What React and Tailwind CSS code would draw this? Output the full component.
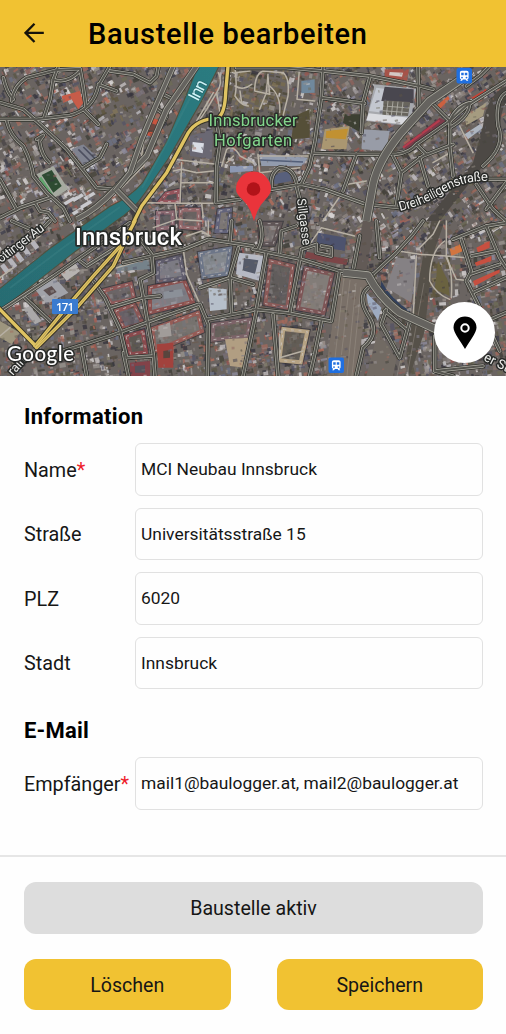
import React from "react";

function createRandom(seed) {
  let a = seed;
  return () => {
    a = (a + 0x6d2b79f5) | 0;
    let t = Math.imul(a ^ (a >>> 15), 1 | a);
    t = (t + Math.imul(t ^ (t >>> 7), 61 | t)) ^ t;
    return ((t ^ (t >>> 14)) >>> 0) / 4294967296;
  };
}

const TONES = [
  "#6e6664", "#827a78", "#4b4648", "#938b86", "#37363d", "#a09a9a", "#6b5c53", "#6d6a56",
  "#7f6d64", "#555465", "#8d8b9c", "#c4bfc0", "#a0695c", "#5a5646", "#766e77", "#d8d5d4",
  "#5b5147", "#403f38", "#8d625c", "#6c7084", "#47443c", "#857f6f", "#99938f", "#3f3e4c",
];

const WOOD_TONES = ["#5f563f", "#6b6148", "#4e4938", "#786c50", "#57513f", "#837659", "#464334"];

function isWood(x, y) {
  return (
    Math.hypot((x - 114) / 1.1, y - 45) < 16 ||
    (x > 232 && x < 290 && y < 48) ||
    (x > 428 && x < 450 && y > 190 && y < 230)
  );
}

function buildHouses() {
  const rand = createRandom(71);
  const out = [];
  for (let i = 0; i < 8200; i++) {
    const x = rand() * 520 - 6;
    const y = rand() * 320 - 6;
    const angle = x < 200 && y < 200 ? -32 : x > 330 && y < 170 ? -38 : y > 150 ? -15 : 8;
    const w = 1.5 + rand() * 5.5;
    const h = 1.5 + rand() * 3.2;
    const list = isWood(x, y) && rand() < 0.85 ? WOOD_TONES : TONES;
    const tone = list[Math.floor(rand() * list.length)];
    const turn = angle + (rand() > 0.5 ? 90 : 0) + rand() * 12;
    out.push(
      <rect key={i} x={x} y={y} width={w} height={h} fill={tone} transform={`rotate(${turn} ${x} ${y})`} opacity={0.8} />
    );
  }
  const roofs = ["#b35f52", "#a96958", "#97524d", "#9d554c", "#bf6e59", "#dcdbde", "#c9c8cf"];
  for (let i = 0; i < 420; i++) {
    const x = rand() * 506;
    const y = rand() * 309;
    const w = 2.5 + rand() * 5;
    const h = 1.4 + rand() * 1.8;
    const turn = (y > 150 ? -15 : -34) + (rand() > 0.5 ? 90 : 0);
    if (isWood(x, y)) continue;
    out.push(
      <rect key={`r${i}`} x={x} y={y} width={w} height={h} fill={roofs[i % roofs.length]} transform={`rotate(${turn} ${x} ${y})`} opacity={0.7} />
    );
  }
  return out;
}

function buildDetail() {
  const rand = createRandom(19);
  const out = [];
  for (let i = 0; i < 2200; i++) {
    const x = rand() * 506;
    const y = rand() * 309;
    out.push(
      <rect key={i} x={x} y={y} width={1 + rand() * 3.5} height={1 + rand() * 2} fill={TONES[Math.floor(rand() * TONES.length)]} transform={`rotate(${-20 + rand() * 20} ${x} ${y})`} opacity={0.5} />
    );
  }
  return out;
}

const HOUSES = buildHouses();
const DETAIL = buildDetail();

// City blocks with roofs round a courtyard: outline, roof tone, yard tone.
const BLOCKS = [
  ["M812 582 L878 598 L862 722 L796 710Z", "#8a5a58", "#5e5a5a"],
  ["M918 604 L996 622 L970 738 L894 724Z", "#7d5557", "#8b8480"],
  ["M348 732 L402 714 L428 770 L372 784Z", "#8c5654", "#66606a"],
  ["M308 672 L392 650 L402 696 L334 710Z", "#8e5958", "#6c6669"],
  ["M450 662 L552 640 L578 704 L450 736Z", "#8b5150", "#868690"],
  ["M378 808 L428 794 L438 856 L392 862Z", "#8a4a4d", "#58544f"],
  ["M458 786 L594 738 L606 792 L464 852Z", "#965c57", "#7b7774"],
  ["M850 786 L922 794 L902 886 L838 880Z", "#b6a384", "#5f5a52"],
  ["M640 774 L750 758 L742 806 L638 818Z", "#7b6468", "#66605a"],
  ["M474 438 L518 436 L518 480 L474 486Z", "#8a6870", "#5a565c"],
  ["M542 428 L596 428 L596 484 L542 480Z", "#93676a", "#6a6262"],
  ["M474 586 L540 570 L552 632 L474 642Z", "#5e5b6c", "#83838f"],
  ["M500 380 L536 372 L536 404 L480 404Z", "#95545c", "#4f4a50"],
  ["M658 432 L690 428 L686 492 L650 492Z", "#62637a", "#827d7a"],
  ["M600 560 L690 545 L680 620 L610 630Z", "#6d7688", "#8e959e"],
  ["M780 470 L840 470 L820 530 L785 530Z", "#5f5557", "#7d7676"],
];

// Each map quadrant holds its roads in a 3:1 drawing scale.
const NW = "translate(0 -1) scale(0.33333)";
const NE = "translate(253 -1) scale(0.33333)";
const SW = "translate(0 154) scale(0.33333)";
const SE = "translate(253 154) scale(0.33333)";

const ROADS = [
  [NW, "M0 160 L110 160 L210 148 Q280 130 295 60 L330 0"],
  [NW, "M-5 108 L70 130 L120 175 L200 250 L255 320 L290 365 L345 370"],
  [NW, "M35 105 Q40 60 80 35 L170 12 L240 8 Q250 60 258 120"],
  [NW, "M175 0 L160 40 L150 100 L132 155"],
  [NW, "M160 40 Q200 55 240 15"],
  [NW, "M10 35 Q20 80 40 100"],
  [NW, "M20 165 Q30 210 70 240 Q95 290 100 330 L140 380 L190 425 L210 465"],
  [NW, "M110 220 L130 208 L118 225 Q125 270 148 290"],
  [NW, "M320 235 L300 275 L250 305"],
  [NW, "M250 130 L295 175"],
  [NW, "M295 55 L350 75"],
  [NW, "M330 15 L400 25 L450 50 L470 30 L475 0"],
  [NW, "M0 455 L60 425 L150 395"],
  [NW, "M0 340 L50 430"],
  [NW, "M105 410 L120 435 L145 440 L165 465"],
  [NW, "M480 80 L520 100 M465 125 L500 150 L480 185"],
  [NW, "M650 170 L660 230 L650 300 L648 410 L720 400"],
  [NE, "M-50 5 L100 5 L210 15 L350 30 L500 60 L540 70"],
  [NE, "M210 0 L205 95 L185 230 L170 300 L145 355"],
  [NE, "M350 35 L330 110 L325 200"],
  [NE, "M205 95 L335 112"],
  [NE, "M495 0 L498 130"],
  [NE, "M180 262 L300 265 L430 265 Q470 260 490 235 L590 165 L640 120 L759 45"],
  [NE, "M310 265 L270 375"],
  [NE, "M55 370 L145 355 L215 370 L340 415 L440 425"],
  [NE, "M55 370 Q50 320 80 305 Q120 305 130 350"],
  [NE, "M530 105 L590 165 L590 240 L600 330"],
  [NE, "M590 165 Q610 120 650 110 Q650 150 590 185"],
  [NE, "M420 270 L445 320 L510 270 L600 235"],
  [NE, "M445 320 L430 420"],
  [NE, "M500 275 L525 360 M490 235 L520 265"],
  [NE, "M640 60 L680 30 L710 0"],
  [NE, "M759 80 Q725 100 735 180 Q760 240 690 300"],
  [NE, "M670 355 L720 430 L759 465 M759 350 L700 430 M759 340 L690 340"],
  [NE, "M130 360 L145 420"],
  [SW, "M0 270 L160 165 L290 75 L390 5"],
  [SW, "M75 230 L160 310"],
  [SW, "M280 180 L315 230 L360 325 L380 410"],
  [SW, "M190 390 L330 345 L480 290 L595 250"],
  [SW, "M330 260 L430 230 L480 225"],
  [SW, "M370 125 L455 105 L550 85 L625 55 L759 75"],
  [SW, "M410 40 L455 100 L460 155 L420 175 L430 230 L460 400 L465 465"],
  [SW, "M600 250 L625 310 L622 465"],
  [SW, "M715 80 L690 165 L695 280"],
  [SW, "M600 200 L690 170 L759 190"],
  [SW, "M620 295 L759 268"],
  [SW, "M380 410 L460 405 M370 395 L385 465 M245 380 L260 465"],
  [SW, "M240 120 L260 135 L355 75"],
  [SW, "M35 0 L115 35 L150 0 M695 0 L690 60"],
  [SE, "M0 85 L145 115 L260 150 L360 160"],
  [SE, "M40 95 L10 265 M145 90 L110 275 M260 150 L235 300 M20 0 Q35 50 15 85"],
  [SE, "M0 265 L100 275 L230 300"],
  [SE, "M60 280 L75 465 M205 300 L185 400 L170 465 M10 270 L-30 465"],
  [SE, "M145 85 L190 70 L190 95 L235 105 M205 75 L235 80 L235 105 M80 95 L85 30 L130 15"],
  [SE, "M360 160 L430 95 L480 40 L510 0"],
  [SE, "M380 110 L370 0 M320 45 L300 150"],
  [SE, "M625 55 L655 150 L640 180 L680 260 L740 390"],
  [SE, "M600 55 L700 15 L759 5"],
  [SE, "M700 15 L740 110 L759 140 M655 105 L730 90 M650 160 L740 130 M660 215 L759 170"],
  [SE, "M700 300 L759 275"],
  [SE, "M400 265 L385 310 L440 410 L470 300 M395 270 L460 325"],
  [SE, "M345 200 Q310 230 350 290 Q380 340 330 380 L310 465"],
  [SE, "M545 345 L545 450 L690 435 M545 450 L600 465"],
];

const PALE_PATHS = [
  [NW, "M435 195 L425 270 M460 225 L430 300 L365 365"],
  [NW, "M640 80 L590 165 M655 20 Q670 50 650 80 L620 130 L600 160 M650 80 L660 140"],
  [NW, "M705 5 Q712 60 705 90 M705 20 L750 15 M705 60 Q730 75 755 55 M705 90 Q725 120 745 120 M720 75 L725 110"],
  [NW, "M665 300 L680 250 Q700 235 720 270 L759 290 M680 290 L700 270"],
  [NW, "M520 280 L650 295 M545 290 L540 410 M440 410 L545 412 L645 412 M520 315 L545 310 L590 320 L640 315 M525 412 L530 460 M605 412 L610 455 M545 350 L640 350"],
  [SW, "M460 20 L530 -5 L605 0 M560 45 L605 30 L630 45 M550 85 L560 160 L600 250 M350 140 L450 110 M0 345 L30 320 M625 0 L625 50"],
  [NE, "M5 75 Q5 25 30 15 L90 20 Q110 35 105 90 L90 150 M45 25 L40 80 L20 130 M5 75 L50 85 L45 30"],
  [NE, "M50 60 Q85 90 80 140 M140 0 L132 100 L185 105 M15 265 L20 320 L140 305 M20 270 L165 270"],
  [NE, "M540 290 L600 255 M620 180 L660 260 M340 345 L285 355 L210 465"],
  [SE, "M435 90 L500 100 L580 105 L640 110 M580 0 L580 110 L610 175 L635 178"],
  [SE, "M580 105 Q600 150 595 230 M575 60 Q530 90 530 180 Q550 220 590 235"],
  [SE, "M500 80 L540 40 L560 0 M490 105 L480 300 M170 70 L205 20 L305 45"],
  [SE, "M80 340 L80 410 L150 390"],
  [SW, "M0 170 L40 140 M20 110 L70 80 M60 85 L120 45"],
];

function Strokes({ items, color, width }) {
  return (
    <g fill="none" stroke={color} strokeWidth={width} strokeLinejoin="round" strokeLinecap="round">
      {items.map(([t, d], i) => (
        <path key={i} transform={t} d={d} />
      ))}
    </g>
  );
}

function Road({ d, t, w = 22 }) {
  return (
    <g transform={t} fill="none" strokeLinejoin="round" strokeLinecap="butt">
      <path d={d} stroke="#3e3e39" strokeWidth={w + 5} />
      <path d={d} stroke="#a8a69d" strokeWidth={w} />
      <path d={d} stroke="#65645f" strokeWidth={w - 5} />
    </g>
  );
}

function TrainBadge({ x, y }) {
  return (
    <g transform={`translate(${x} ${y})`}>
      <rect width="15.5" height="15.5" rx="2" fill="#1f6fe0" />
      <path
        fill="#fff"
        fillRule="evenodd"
        d="M5.4 2.8h4.7c1.3 0 2 .7 2 2v4.7c0 1-.5 1.6-1.3 1.8l1 1.4H10l-.9-1.2H6.4l-.9 1.2H3.7l1-1.4c-.8-.2-1.3-.8-1.3-1.8V4.8c0-1.3.7-2 2-2ZM4.7 4.7v2.6h2.5V4.7Zm3.6 0v2.6h2.5V4.7ZM5.5 8.7a.9.9 0 1 0 0 1.8.9.9 0 0 0 0-1.8Zm4.5 0a.9.9 0 1 0 0 1.8.9.9 0 0 0 0-1.8Z"
      />
    </g>
  );
}

function SatelliteMap() {
  const riverway = "M199 -2 L184 35 L167 75 L143 116 Q130 131 110 140 L90 154 L50 182 L0 222 L0 243 L37 214 L75 184 L115 154 Q133 143 145 125 L168 91 L187 58 L201 34 L219 -2Z";
  const highway = "M684 0 L677 80 Q675 140 655 155 Q590 160 565 200 L500 320 L425 420 L400 470";
  return (
    <svg
      viewBox="0 0 506 309"
      className="block h-[309px] w-full"
      fontFamily="Roboto, sans-serif"
      paintOrder="stroke"
      strokeLinejoin="round"
    >
      <defs>
        <filter id="soft" x="0" y="0" width="100%" height="100%">
          <feGaussianBlur stdDeviation="0.45" />
        </filter>
        <linearGradient id="river" x1="0" y1="1" x2="1" y2="0">
          <stop offset="0" stopColor="#286c72" />
          <stop offset="1" stopColor="#2c7b80" />
        </linearGradient>
      </defs>
      <rect width="506" height="309" fill="#6a6461" />
      <g filter="url(#soft)">
        {HOUSES}
        <g transform="scale(0.33333)">
          {BLOCKS.map(([d, roof, yard]) => (
            <g key={d} strokeLinejoin="miter">
              <path d={d} fill={yard} stroke="#35333a" strokeWidth="18" opacity=".75" />
              <path d={d} fill="none" stroke={roof} strokeWidth="12" />
              <path d={d} fill="none" stroke="#cfc8c6" strokeWidth="3" strokeDasharray="9 14" opacity=".7" />
            </g>
          ))}
        </g>
        <g transform={NW}>
          <path d="M185 90 L240 75 L250 110 L235 130 L215 100 L190 110Z" fill="#c75c4a" />
          <path d="M455 155 L485 165 L465 215 L432 205Z" fill="#c9543f" />
          <path d="M455 172 L470 177 L460 200 L447 195Z" fill="#6d4741" />
          <path d="M110 325 L160 300 L205 370 L155 400Z" fill="#a6aaa0" />
          <path d="M125 327 L155 312 L185 360 L160 380Z" fill="#2d4c33" />
          <path d="M120 335 L155 388" stroke="#62a56e" strokeWidth="9" />
          <path d="M570 210 L640 190 L635 280 L570 270Z" fill="#6b6773" />
          <path d="M578 228 L612 232 L608 262 L576 256Z" fill="#d9dde5" />
          <path d="M215 250 L250 235 L300 280 L255 305Z" fill="#808390" />
          <path d="M235 250 L270 285 M250 243 L285 278" stroke="#4d5060" strokeWidth="5" />
          <path d="M690 300 L759 300 L759 315 L690 320Z" fill="#8d98b2" />
          {[[190, 410], [215, 400], [240, 420], [215, 440], [250, 395]].map(([x, y]) => (
            <path key={`${x}${y}`} d={`M${x} ${y} l30 -18 l7 8 l-30 18Z`} fill="#c9c9cd" />
          ))}
        </g>
        <g transform={NE}>
          <path d="M365 55 L490 68 L470 180 L340 165Z" fill="#a7a9ae" />
          <path d="M370 65 L405 70 L390 140 L348 135Z" fill="#c3c7cf" />
          <path d="M395 62 L482 70 L482 112 L385 105Z" fill="#4a4650" />
          <path d="M392 103 L472 108 L465 150 L388 146Z" fill="#68655d" />
          <path d="M405 105 L400 148 M420 106 L415 148 M435 107 L430 148 M450 108 L445 149 M390 120 L470 126 M388 134 L466 140" stroke="#b1b0a8" strokeWidth="2.5" />
          <path d="M347 142 L470 155 L465 176 L340 163Z" fill="#dadbdf" />
          <path d="M330 190 L410 195 L400 255 L325 250Z" fill="#989ca7" />
          <path d="M145 45 L185 40 L185 80 L145 82Z" fill="#70889c" />
          <path d="M125 150 L170 130 L170 215 L115 220Z" fill="#554f39" />
          <path d="M215 190 L290 180 L280 250 L205 250Z" fill="#aa9771" />
          <path d="M220 195 L285 188 L278 220 L218 215Z" fill="#c19130" />
          <path d="M275 145 L330 145 L325 200 L270 170Z" fill="#3c3f31" />
          <path d="M20 265 L165 275 L145 300 L25 300Z" fill="#929bad" />
          <path d="M22 282 L150 288" stroke="#535e78" strokeWidth="5" />
          <path d="M395 10 L468 10 L462 45 L395 35Z" fill="#a65349" />
          <path d="M410 18 L450 20 L447 32 L408 28Z" fill="#d4c9c5" />
          <path d="M450 240 L560 155 L578 165 L460 255Z" fill="#7b3a4a" />
          <path d="M450 245 L560 163" stroke="#b53b4d" strokeWidth="6" />
          <path d="M655 95 L700 68 L700 82 L665 102Z" fill="#c64538" />
          <path d="M550 120 L585 90 L590 98 L560 130Z" fill="#cc6040" />
          <path d="M635 150 L700 110 L690 150 L640 178Z" fill="#a59b80" />
          <path d="M635 205 L680 175 L690 185 L645 220Z" fill="#aeb5c0" />
          <path d="M690 180 Q700 90 759 60 L759 110 Q735 150 745 220 L690 300 L560 465 L520 465 L660 290Z" fill="#4e4a45" />
          <path d="M60 325 L110 315 L115 345 L65 355Z" fill="#59607b" />
        </g>
        <g transform={SW}>
          {[[0, 135], [22, 118], [43, 100], [64, 83], [88, 62]].map(([x, y]) => (
            <path key={x} d={`M${x} ${y} l12 -8 l18 24 l-12 9Z`} fill="#b5b4ba" />
          ))}
          <path d="M105 205 L165 170 L205 215 L140 250Z" fill="#a1a2a8" />
          <path d="M130 208 L155 195 L170 213 L148 225Z" fill="#5d5050" />
          <path d="M70 265 L90 255 L125 300 L105 310Z" fill="#aaa8a8" />
          <path d="M180 155 L225 125 L240 150 L200 180Z" fill="#b7b3b0" />
          <path d="M360 130 L445 115 L450 145 L350 150Z" fill="#75828a" />
          <path d="M490 212 L545 204 L550 226 L492 234Z" fill="#8b9098" />
          <path d="M625 200 L680 205 L680 265 L630 270Z" fill="#b6bfca" />
          <path d="M715 95 L795 105 L780 180 L708 160Z" fill="#b6b9c4" />
          <path d="M732 112 L775 118 L765 158 L728 148Z" fill="#555a69" />
          <path d="M475 315 L510 305 L515 345 L475 350Z" fill="#a19c99" />
          <path d="M470 370 L520 365 L520 440 L475 440Z" fill="#a2433c" />
          <path d="M490 390 L510 387 L510 410 L490 412Z" fill="#58443e" />
          <path d="M675 355 L745 350 L735 440 L690 435Z" fill="#b19e82" />
          <path d="M390 425 L450 420 L450 465 L390 465Z" fill="#83424a" />
          <path d="M405 435 L435 433 L435 455 L405 455Z" fill="#57515a" />
          <path d="M0 300 L60 335 L35 370 L0 350Z" fill="#9d957e" />
        </g>
        <g transform={SE}>
          <path d="M195 35 L280 50 L275 90 L190 75Z" fill="#4e526e" />
          <path d="M160 92 L285 115 L280 132 L155 110Z" fill="#7c4547" />
          <path d="M260 160 L350 175 L310 465 L215 465Z" fill="#7a7067" />
          <path d="M330 0 L365 0 L340 150 L305 145Z" fill="#625a56" />
          <path d="M385 180 Q410 230 470 270 L475 285 Q400 250 382 205Z" fill="#33415b" />
          <path d="M430 110 L490 115 L475 245 L400 200Z" fill="#858184" />
          <path d="M510 105 L535 0 L575 0 L540 100 L515 330 L470 465 L460 400Z" fill="#565149" />
          <path d="M375 330 L430 415 L420 465 L340 465Z" fill="#716a64" />
          <path d="M340 215 L385 260 L375 300 L345 250Z" fill="#9eabc1" />
          <path d="M590 85 L620 70 L630 90 L595 105Z" fill="#d27541" />
          <path d="M670 80 L710 60 L710 80 L675 95Z M665 125 L715 105 L715 120 L670 135Z M660 180 L740 145 L740 155 L665 195Z" fill="#c74f3f" />
          <path d="M555 120 L585 180 L590 225 L545 205Z" fill="#6b6241" />
        </g>
        {DETAIL}
        <g stroke="#a29a92" strokeWidth="0.6" opacity=".7">
          <path d="M344 210 L333 309 M350 213 L339 309 M356 216 L347 309 M361 220 L352 309 M416 220 L397 309 M424 216 L407 309" />
        </g>
        <path d={riverway} fill="url(#river)" stroke="#4f5140" strokeWidth="2.2" />
        <path d="M191 29 L163 83 L142 121 M120 140 L64 180 L10 221" fill="none" stroke="#3f8689" strokeWidth="2" opacity=".35" />
        <Strokes items={PALE_PATHS} color="#b7b0a4" width="4.5" />
        <Strokes items={ROADS} color="#33342f" width="15" />
        <Strokes items={ROADS} color="#b0aea5" width="10" />
        <Strokes items={ROADS} color="#55544f" width="6" />
        <Road t={NW} w={17} d="M590 0 L500 130 L440 270 L345 370 Q290 430 230 460" />
        <Road t={NW} w={15} d="M520 0 L465 125 L425 220 L390 320 L345 375" />
        <Road t={NW} w={15} d="M350 372 L415 438" />
        <Road t={NE} w={25} d="M625 40 L530 105 L440 205 Q375 285 360 355 L340 465" />
        <Road t={SE} w={24} d="M270 155 L345 163 Q380 230 440 275 L560 330" />
        <Strokes items={[[NW, highway], [SW, "M405 0 L370 65 L280 165 L220 235 L105 375"], [SW, "M385 40 L340 135 L235 255 L110 380"], [SW, "M-10 255 L110 378"], [NW, "M684 0 L680 60"]]} color="#373427" width="16" />
        <Strokes items={[[NW, highway], [SW, "M405 0 L370 65 L280 165 L220 235 L105 375"], [SW, "M385 40 L340 135 L235 255 L110 380"], [SW, "M-10 255 L110 378"]]} color="#dfc362" width="10" />
        <Strokes items={[[SW, "M370 65 L280 165 L220 235 L105 375"], [SW, "M385 45 L340 135 L235 255 L110 380"]]} color="#ac9650" width="2" />
      </g>

      <g fill="#f1f1ef" stroke="#282a28" strokeWidth="3">
        <text x="198" y="35" fontSize="17" fill="#d0f4f8" stroke="#28696d" strokeWidth="1.5" transform="rotate(-63 198 35)" paintOrder="stroke" textLength="21">Inn</text>
        <text x="253" y="59" fontSize="16.5" fill="#83d68c" textAnchor="middle" paintOrder="stroke" textLength="89">Innsbrucker</text>
        <text x="253" y="79" fontSize="16.5" fill="#83d68c" textAnchor="middle" paintOrder="stroke" textLength="78">Hofgarten</text>
        <text x="128.500" y="178" fontSize="24" fontWeight="500" fill="#fff" strokeWidth="3.500" textAnchor="middle" paintOrder="stroke" textLength="107">Innsbruck</text>
        <text x="1" y="196" fontSize="12.500" transform="rotate(-37 1 196)" paintOrder="stroke" textLength="55">ottinger Au</text>
        <text x="297" y="132" fontSize="12.500" transform="rotate(83 297 132)" paintOrder="stroke" textLength="47">Sillgasse</text>
        <path id="street" d="M400 144 Q422 139 445 125 Q464 113 490 114" fill="none" stroke="none" />
        <text fontSize="13" paintOrder="stroke">
          <textPath href="#street" textLength="94">Dreiheiligenstraße</textPath>
        </text>
        <text x="483" y="293" fontSize="13" transform="rotate(27 483 293)" paintOrder="stroke">er St</text>
        <text x="13" y="309" fontSize="12.500" transform="rotate(-48 13 309)" paintOrder="stroke">rain</text>
        <text x="7" y="294" fontSize="20.500" fontFamily="Lato, sans-serif" fontWeight="500" fill="#fff" strokeWidth="3" paintOrder="stroke" textLength="67">Google</text>
      </g>
      <rect x="52" y="232" width="26" height="15" rx="1" fill="#397bd0" />
      <text x="65" y="244" fontSize="11.500" fontFamily="Open Sans, sans-serif" fontWeight="600" fill="#fff" textAnchor="middle" textLength="18">171</text>
      <TrainBadge x={456.500} y={1} />
      <TrainBadge x={328.500} y={290.500} />
      <path d="M254 154 Q252.500 149 250.500 144 Q248 138 242 132 Q236 127 236 122 A17.500 17.500 0 0 1 271 122 Q271 127 265 133 Q260 138 257.500 144 Q255.500 149 254 154Z" fill="#ea343b" />
      <circle cx="253.500" cy="122" r="6.800" fill="#b11319" />
    </svg>
  );
}

function Field({ label, value, required }) {
  return (
    <div className="flex h-[52.5px] items-center">
      <label className="w-[111px] shrink-0 whitespace-nowrap pt-[3px] text-[19.8px] text-[#161616]">
        {label}
        {required && <span className="text-[#ee1c2a]">*</span>}
      </label>
      <div className="flex h-full min-w-0 flex-1 items-center whitespace-nowrap rounded-[6px] border border-[#e1e1e1] pl-[5px] text-[17.4px] text-[#161616]">
        {value}
      </div>
    </div>
  );
}

export default function App() {
  return (
    <div className="flex h-[1034px] w-full flex-col overflow-hidden bg-[#fefefe] font-['Roboto',sans-serif] text-black">
      <header className="flex h-[67px] shrink-0 items-center bg-[#f1c232] pl-[24px]">
        <svg viewBox="0 0 20 20" className="-mt-0.5 size-5 shrink-0" fill="none" stroke="#15120a" strokeWidth="2.3">
          <path d="M10.500 .8 1.500 9.900l9 9.100M1.500 9.900h18.300" />
        </svg>
        <h1 className="ml-[44px] whitespace-nowrap pt-[2px] text-[29px] font-medium tracking-[0.68px]">Baustelle bearbeiten</h1>
      </header>

      <section className="relative h-[309px] shrink-0">
        <SatelliteMap />
        <button className="absolute right-[11px] top-[235px] flex size-[61px] items-center justify-center rounded-full bg-white">
          <svg viewBox="0 0 24 34" className="h-[34px] w-6">
            <path d="M12 33 Q9 28 5 22 Q.5 15 .5 11.500 A11.500 11 0 0 1 23.500 11.500 Q23.500 15 19 22 Q15 28 12 33Z" />
            <circle cx="12" cy="12" r="3.700" fill="none" stroke="#fff" strokeWidth="2" />
          </svg>
        </button>
      </section>

      <main className="flex h-[481px] shrink-0 flex-col border-b-2 border-[#e6e6e6] pl-[24px] pr-[23px]">
        <h2 className="mt-[27px] text-[22px] font-bold leading-7 tracking-[0.3px]">Information</h2>
        <div className="mt-3 flex flex-col gap-3">
          <Field label="Name" value="MCI Neubau Innsbruck" required />
          <Field label="Straße" value="Universitätsstraße 15" />
          <Field label="PLZ" value="6020" />
          <Field label="Stadt" value="Innsbruck" />
        </div>
        <h2 className="mb-3 mt-[28px] text-[22px] font-bold leading-7 tracking-[0.2px]">E-Mail</h2>
        <Field label="Empfänger" value="mail1@baulogger.at, mail2@baulogger.at" required />
      </main>

      <footer className="flex flex-col gap-[25px] pl-[24px] pr-[23px] pt-[25px] text-[19.6px] text-[#161616]">
        <button className="h-[52px] rounded-[12px] bg-[#dddddd] pt-0.5">Baustelle aktiv</button>
        <div className="grid grid-cols-2 gap-[46px]">
          <button className="h-[51px] rounded-[12px] bg-[#f1c232] pt-0.5">Löschen</button>
          <button className="h-[51px] rounded-[12px] bg-[#f1c232] pt-0.5">Speichern</button>
        </div>
      </footer>
    </div>
  );
}
